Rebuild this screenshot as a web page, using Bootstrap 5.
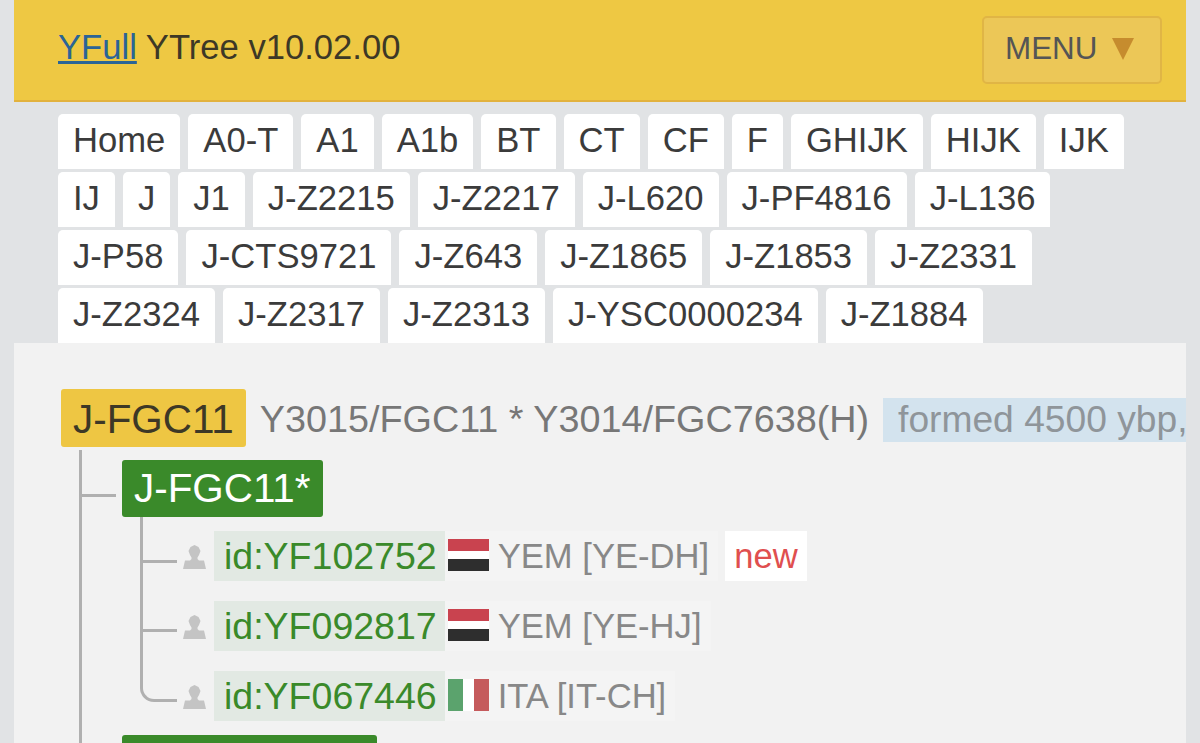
<!DOCTYPE html>
<html lang="en">
<head>
    <meta charset="UTF-8">
    <meta name="viewport" content="width=device-width, initial-scale=1.0">
    <title>YFull YTree</title>
    <link href="https://cdn.jsdelivr.net/npm/bootstrap@5.3.2/dist/css/bootstrap.min.css" rel="stylesheet">
    <style>
        html, body {
            height: 100%;
            overflow: hidden;
        }
        body {
            background-color: #e1e3e5;
            font-family: "Liberation Sans", Arial, sans-serif;
            padding: 0 14px;
            color: #333;
        }
        .site-head {
            height: 102px;
            flex: none;
            background-color: #eec843;
            border-bottom: 2px solid #e2b23e;
            padding: 0 24px 4px 44px;
            font-size: 34.62px;
            color: #3d3826;
        }
        .site-head a {
            color: #2a6496;
        }
        .menu-btn {
            width: 180px;
            height: 68px;
            margin-top: 4px;
            background-color: #ecc757;
            border: 2px solid #e0b545;
            border-radius: 5px;
            color: #555;
            font-size: 31.4px;
            padding: 0 0 2px 21px;
            column-gap: 15px;
        }
        .tab-bar {
            flex: none;
            padding: 12px 44px 0;
            column-gap: 8px;
            row-gap: 3px;
        }
        .tab-bar .nav-link {
            height: 55px;
            padding: 0 15px;
            line-height: 53px;
            font-size: 34.62px;
            color: #3b3b3b;
            background-color: #fff;
            border-radius: 5px 5px 0 0;
        }
        .tree-panel {
            background-color: #f2f2f2;
            padding: 46px 0 0 47px;
            white-space: nowrap;
        }
        .node-root {
            height: 58px;
            padding: 2px 12px 0;
            background-color: #eec643;
            border-radius: 3px;
            color: #3d3826;
            font-size: 40.4px;
            flex: none;
        }
        .snp-list {
            margin-left: 14px;
            padding-top: 4px;
            line-height: 1.2;
            font-size: 37.75px;
            color: #777;
            flex: none;
        }
        .age-chip {
            height: 44px;
            margin: 4px 0 0 14px;
            padding: 0 0 0 15px;
            background-color: #d3e3ee;
            color: #8f959a;
            font-size: 37.2px;
            flex: none;
        }
        .branch-list {
            list-style: none;
            margin: 3px 0 0 18px;
            padding: 0 0 0 40px;
            border-left: 3px solid #b0b0b0;
            min-height: 400px;
        }
        .branch-item {
            position: relative;
            padding-top: 14px;
        }
        .branch-item:first-child {
            padding-top: 10px;
        }
        .branch-item::before {
            content: "";
            position: absolute;
            left: -40px;
            top: 44px;
            width: 34px;
            border-top: 3px solid #b0b0b0;
        }
        .node-green {
            display: inline-flex;
            align-items: center;
            height: 57px;
            padding: 0 12px;
            background-color: #3a8a2a;
            border-radius: 3px;
            color: #fff;
            font-size: 40.4px;
            vertical-align: top;
        }
        .node-wide {
            width: 255px;
        }
        .leaf-list {
            list-style: none;
            margin: 0 0 0 18px;
            padding: 0;
        }
        .leaf-item {
            position: relative;
            padding: 20px 0 0 43px;
        }
        .leaf-item:first-child {
            padding-top: 14px;
        }
        .leaf-item::before {
            content: "";
            position: absolute;
            left: 0;
            top: 0;
            width: 37px;
            height: 51px;
            border-bottom: 3px solid #b0b0b0;
            border-left: 3px solid #b0b0b0;
        }
        .leaf-item:first-child::before {
            height: 46px;
        }
        .leaf-item:last-child::before {
            border-bottom-left-radius: 14px;
        }
        .leaf-item:not(:last-child)::after {
            content: "";
            position: absolute;
            left: 0;
            top: 0;
            bottom: 0;
            border-left: 3px solid #b0b0b0;
        }
        .leaf-row {
            height: 50px;
        }
        .person-icon {
            width: 23px;
            height: 24px;
            margin: 14px 8px 0 0;
            flex: none;
        }
        .id-chip {
            height: 50px;
            padding: 1px 8px 0 10px;
            background-color: #e2e9e3;
            color: #3a8a2a;
            font-size: 37.5px;
        }
        .geo-chip {
            height: 50px;
            padding: 1px 9px 0 3px;
            background-color: #f4f4f4;
            color: #888;
            font-size: 34.62px;
            column-gap: 9px;
        }
        .geo-flag {
            margin-bottom: 3px;
        }
        .new-chip {
            height: 50px;
            margin-left: 7px;
            padding: 2px 9px 0;
            background-color: #fff;
            color: #e04f4f;
            font-size: 34.62px;
        }
    </style>
</head>
<body class="d-flex flex-column">

    <!-- header -->
    <header class="site-head d-flex justify-content-between align-items-center">
        <div><a href="#">YFull</a> YTree v10.02.00</div>
        <button type="button" class="menu-btn d-flex align-items-center">
            MENU
            <svg width="22" height="22" viewBox="0 0 22 22"><polygon points="0,0 22,0 11,22" fill="#c68c2e"/></svg>
        </button>
    </header>

    <!-- breadcrumb tabs -->
    <ul class="nav tab-bar" id="tabs"></ul>

    <!-- tree -->
    <main class="tree-panel flex-grow-1 overflow-hidden">
        <div class="d-flex align-items-center">
            <div class="node-root d-flex align-items-center">J-FGC11</div>
            <div class="snp-list">Y3015/FGC11 * Y3014/FGC7638(H)</div>
            <div class="age-chip d-flex align-items-center">formed 4500 ybp,</div>
        </div>
        <ul class="branch-list">
            <li class="branch-item">
                <span class="node-green">J-FGC11*</span>
                <ul class="leaf-list" id="leaves"></ul>
            </li>
            <li class="branch-item">
                <span class="node-green node-wide"></span>
            </li>
        </ul>
    </main>

    <script>
        const tabs = ["Home", "A0-T", "A1", "A1b", "BT", "CT", "CF", "F", "GHIJK", "HIJK", "IJK",
            "IJ", "J", "J1", "J-Z2215", "J-Z2217", "J-L620", "J-PF4816", "J-L136",
            "J-P58", "J-CTS9721", "J-Z643", "J-Z1865", "J-Z1853", "J-Z2331",
            "J-Z2324", "J-Z2317", "J-Z2313", "J-YSC0000234", "J-Z1884"];

        const flags = {
            YEM: '<rect width="41" height="12" fill="#c9434f"/><rect y="12" width="41" height="8" fill="#fff"/><rect y="20" width="41" height="12" fill="#2e2e2e"/>',
            ITA: '<rect width="15" height="32" fill="#5ba36d"/><rect x="15" width="11" height="32" fill="#fff"/><rect x="26" width="15" height="32" fill="#c55a5c"/>'
        };

        const leaves = [
            { id: "id:YF102752", country: "YEM", place: "YEM [YE-DH]", isNew: true },
            { id: "id:YF092817", country: "YEM", place: "YEM [YE-HJ]" },
            { id: "id:YF067446", country: "ITA", place: "ITA [IT-CH]" }
        ];

        document.getElementById("tabs").innerHTML = tabs
            .map(t => `<li class="nav-item"><a class="nav-link" href="#">${t}</a></li>`).join('');

        document.getElementById("leaves").innerHTML = leaves.map(l => `
            <li class="leaf-item">
                <div class="leaf-row d-flex">
                    <svg class="person-icon" viewBox="0 0 23 24"><path d="M11.5 0 L15.5 2 L17.5 6 L16 10 L14.5 12.5 V14 L16 15.5 H21 L23 24 H0 L2 15.5 H7 L8.5 14 V12.5 L7 10 L5.5 6 L7.5 2 Z" fill="#c4c4c4"/></svg>
                    <div class="id-chip d-flex align-items-center">${l.id}</div>
                    <div class="geo-chip d-flex align-items-center">
                        <svg class="geo-flag" width="41" height="32" viewBox="0 0 41 32">${flags[l.country]}</svg>
                        ${l.place}
                    </div>
                    ${l.isNew ? '<div class="new-chip d-flex align-items-center">new</div>' : ''}
                </div>
            </li>`).join('');
    </script>

    <script src="https://cdn.jsdelivr.net/npm/bootstrap@5.3.2/dist/js/bootstrap.bundle.min.js"></script>
</body>
</html>
